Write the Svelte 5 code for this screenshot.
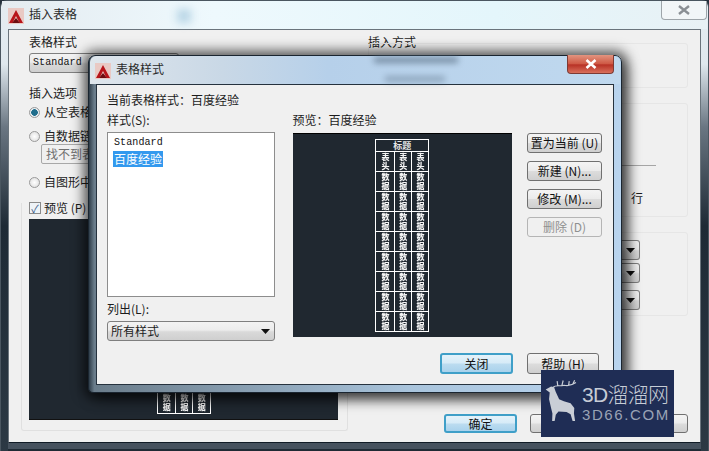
<script>
  const dataRows = Array.from({ length: 8 }, (_, i) => i);
  const cols = [0, 1, 2];
  const sideButtons = [
    { label: "置为当前 (U)" },
    { label: "新建 (N)..." },
    { label: "修改 (M)..." },
    { label: "删除 (D)", disabled: true }
  ];
</script>

{#snippet logo()}
  <svg class="acad" viewBox="0 0 16 16" width="16" height="16">
    <rect width="16" height="16" fill="#e9c9c4" />
    <path d="M1 15 L8 2 L15 15 L11.5 15 L8 8 L4.5 15Z" fill="#b8141a" />
    <path d="M4 15 L8 10 L12 15Z" fill="#6d0c10" />
  </svg>
{/snippet}

{#snippet arrow()}
  <svg class="arrow" viewBox="0 0 9 5" width="9" height="5"><path d="M0 0H9L4.5 5Z" fill="#111" /></svg>
{/snippet}

{#snippet cell(text)}
  <div class="cell"><span>{text}</span></div>
{/snippet}

<div class="screen">
  <!-- back window -->
  <div class="win">
    <div class="titlebar">
      {@render logo()}
      <span class="title">插入表格</span>
      <i class="smudge"></i>
      <div class="close-back">
        <svg viewBox="0 0 12 10" width="12" height="10"><path d="M1 1L11 9M11 1L1 9" stroke="#8a8f94" stroke-width="2.4" /></svg>
      </div>
    </div>
    <div class="body">
      <div class="left">
        <div class="txt">表格样式</div>
        <div class="select std"><span class="latin">Standard</span></div>
        <div class="txt opts">插入选项</div>
        <div class="radio-row first"><i class="radio on"></i>从空表格</div>
        <div class="radio-row"><i class="radio"></i>自数据链</div>
        <div class="input-box">找不到表</div>
        <div class="radio-row third"><i class="radio"></i>自图形中</div>
        <div class="preview-group">
          <div class="check-row"><i class="check">✓</i>预览 (P)</div>
          <div class="dark-back">
            <div class="mini">
              <div class="row">{#each cols as c (c)}{@render cell("数据")}{/each}</div>
            </div>
          </div>
        </div>
      </div>
      <div class="right">
        <div class="txt">插入方式</div>
        <div class="faint box1"></div>
        <div class="faint box2">
          <div class="rule"></div>
          <div class="hang">行</div>
        </div>
        <div class="faint box3">
          <div class="select mini-select">{@render arrow()}</div>
          <div class="select mini-select">{@render arrow()}</div>
          <div class="select mini-select">{@render arrow()}</div>
        </div>
        <div class="actions">
          <button class="btn default ok">确定</button>
          <button class="btn cancel" aria-label="取消"></button>
        </div>
      </div>
    </div>
  </div>

  <!-- front dialog -->
  <div class="dialog">
    <div class="d-title">
      {@render logo()}
      <span class="title">表格样式</span>
      <i class="ghost g1"></i>
      <i class="ghost g2"></i>
      <div class="close-red">
        <svg viewBox="0 0 12 10" width="12" height="10"><path d="M1.5 1L10.5 9M10.5 1L1.5 9" stroke="#fff" stroke-width="2.6" /></svg>
      </div>
    </div>
    <div class="d-body">
      <div class="current">当前表格样式：百度经验</div>
      <div class="d-cols">
        <div class="d-left">
          <div class="txt">样式(S):</div>
          <div class="list">
            <div class="latin item">Standard</div>
            <div class="item selected">百度经验</div>
          </div>
          <div class="txt listed">列出(L):</div>
          <div class="select all"><span>所有样式</span>{@render arrow()}</div>
        </div>
        <div class="d-mid">
          <div class="txt">预览：百度经验</div>
          <div class="dark">
            <div class="mini">
              <div class="head">标题</div>
              <div class="row">{#each cols as c (c)}{@render cell("表头")}{/each}</div>
              {#each dataRows as r (r)}
                <div class="row">{#each cols as c (c)}{@render cell("数据")}{/each}</div>
              {/each}
            </div>
          </div>
        </div>
        <div class="d-side">
          {#each sideButtons as b (b.label)}
            <button class="btn side" class:disabled={b.disabled}>{b.label}</button>
          {/each}
        </div>
      </div>
      <div class="d-actions">
        <button class="btn default">关闭</button>
        <button class="btn help">帮助 (H)</button>
      </div>
    </div>
  </div>

  <!-- site watermark -->
  <div class="mark">
    <svg class="deer" viewBox="0 0 110 130" width="37" height="44">
      <path d="M8 37 L24 28 L33 30 L38 44 L48 66 L62 72 L82 78 L93 92 L92 108 L96 134 L89 134 L82 110 L70 104 L46 102 L38 112 L34 134 L27 134 L28 108 L24 92 L18 66 L20 46Z" fill="#c9ced6" />
      <path d="M30 30 C38 22 50 28 62 24 M44 26 L42 12 M56 25 L60 10 M62 24 C72 27 86 24 98 16 M76 25 L78 12 M88 22 L94 9" stroke="#c9ced6" stroke-width="3.5" fill="none" />
    </svg>
    <div class="mark-text">
      <div class="mark-cn">3D溜溜网</div>
      <div class="mark-en">3D66.COM</div>
    </div>
  </div>
</div>

<style>
  :global(body) {
    margin: 0;
    background: #26323d;
  }

  .screen {
    position: relative;
    width: 709px;
    height: 451px;
    overflow: hidden;
    font-family: "Noto Sans CJK SC", "Liberation Sans", sans-serif;
    font-size: 12px;
    line-height: 12px;
    color: #1c1c1c;
  }

  .latin {
    font-family: "Liberation Mono", "DejaVu Sans Mono", monospace;
    font-size: 10px;
    letter-spacing: 0.1px;
    color: #111;
  }

  .txt {
    height: 12px;
    white-space: nowrap;
  }

  /* back window */
  .win {
    width: 709px;
    height: 451px;
    box-sizing: border-box;
    padding: 0 7px 8px;
    border-radius: 7px 7px 0 0;
    border: 1px solid #4a5660;
    border-bottom: 0;
    background: linear-gradient(#e6eef3 0, #dfe8ee 14%, #6a7682 28%, #1e2a35 50%, #2c3944 100%);
    display: flex;
    flex-direction: column;
  }

  .titlebar {
    height: 28px;
    margin: 0 -6px;
    padding-left: 6px;
    display: flex;
    align-items: center;
    gap: 5px;
    position: relative;
    background: linear-gradient(90deg, #e4ebf0, #eef9fd 30%, #e4f6fb 70%, #e8f1f5);
  }

  .acad {
    flex: none;
    margin-top: 1px;
  }

  .title {
    font-size: 12px;
    color: #2b2b2b;
    margin-top: -2px;
  }

  .smudge {
    position: absolute;
    left: 175px;
    top: 8px;
    width: 14px;
    height: 14px;
    background: #b9d6e6;
    filter: blur(4px);
  }

  .close-back {
    margin-left: auto;
    margin-top: -9px;
    width: 46px;
    height: 19px;
    box-sizing: border-box;
    border: 1px solid #9ea5aa;
    border-top: 0;
    border-radius: 0 0 4px 4px;
    background: #f2f6f8;
    display: flex;
    align-items: center;
    justify-content: center;
  }

  .body {
    flex: 1;
    box-sizing: border-box;
    border: 1px solid #6a747c;
    border-bottom-color: #111c26;
    background: #f0f0f0;
    padding: 6px 13px 0 20px;
    display: flex;
    gap: 30px;
    min-height: 0;
    box-shadow: 0 6px #46525e, 0 8px #1f2a34;
  }

  .left {
    width: 309px;
    display: flex;
    flex-direction: column;
  }

  .select {
    box-sizing: border-box;
    height: 20px;
    border: 1px solid #7f7f7f;
    border-radius: 3px;
    background: linear-gradient(#f3f3f3, #ececec 45%, #d9d9d9 55%, #cfcfcf);
    display: flex;
    align-items: center;
    justify-content: space-between;
    padding: 0 4px 0 3px;
  }

  .std {
    width: 150px;
    margin-top: 5px;
  }

  .opts {
    margin-top: 14px;
  }

  .radio-row {
    display: flex;
    align-items: center;
    gap: 4px;
    height: 12px;
    margin-top: 12px;
    white-space: nowrap;
  }

  .radio-row.first {
    margin-top: 7px;
  }

  .radio {
    width: 11px;
    height: 11px;
    box-sizing: border-box;
    border-radius: 50%;
    border: 1px solid #9a9a9a;
    background: radial-gradient(#fff, #d9d9d9);
  }

  .radio.on {
    background: radial-gradient(#1f6d8c 0 3px, #e8eef2 3.6px);
  }

  .input-box {
    width: 150px;
    height: 20px;
    margin: 2px 0 0 12px;
    box-sizing: border-box;
    border: 1px solid #a8a8a8;
    border-radius: 2px;
    padding: 3px 4px;
    color: #6f6f6f;
    white-space: nowrap;
  }

  .preview-group {
    margin: 15px 0 0 -8px;
    padding: 0 0 10px 8px;
    height: 228px;
    box-sizing: border-box;
    border: 1px solid #e0e0e0;
    border-top: 0;
    border-radius: 0 0 3px 3px;
    display: flex;
    flex-direction: column;
    width: 327px;
  }

  .check-row {
    display: flex;
    align-items: center;
    gap: 3px;
    height: 12px;
    white-space: nowrap;
    margin-left: -1px;
    margin-top: -1px;
  }

  .check {
    width: 12px;
    height: 12px;
    box-sizing: border-box;
    border: 1px solid #8a8a8a;
    background: #eef3f7;
    color: #3d5d8a;
    font-style: normal;
    font-size: 11px;
    line-height: 10px;
    text-align: center;
  }

  .dark-back {
    margin-top: 5px;
    margin-left: -1px;
    width: 309px;
    height: 203px;
    background: #202830;
    border-bottom: 1px solid #111;
    box-sizing: border-box;
    display: flex;
    flex-direction: column;
    align-items: center;
    justify-content: flex-end;
    padding-bottom: 5px;
  }

  .mini {
    width: 54px;
    box-sizing: border-box;
    border: 1px solid #fff;
    display: flex;
    flex-direction: column;
    color: #fff;
  }

  .head {
    height: 11px;
    font-size: 9px;
    line-height: 11px;
    font-weight: 700;
    text-align: center;
    color: #e6e6e6;
  }

  .row {
    display: grid;
    grid-template-columns: repeat(3, 1fr);
    height: 20px;
  }

  .head ~ .row {
    border-top: 1px solid #fff;
    box-sizing: border-box;
  }

  .cell {
    display: flex;
    align-items: center;
    justify-content: center;
    font-size: 8px;
    line-height: 8px;
    font-weight: 900;
    box-sizing: border-box;
    border-left: 1px solid #fff;
    color: #f4f4f4;
    overflow: hidden;
  }

  .cell span {
    writing-mode: vertical-rl;
    letter-spacing: 1px;
    filter: blur(0.3px);
  }

  .cell:first-child {
    border-left: 0;
  }

  .right {
    width: 320px;
    display: flex;
    flex-direction: column;
    align-items: stretch;
  }

  .faint {
    border: 1px solid #e6e6e6;
    border-radius: 3px;
    box-sizing: border-box;
  }

  .box1 {
    height: 45px;
    margin-top: -5px;
  }

  .box2 {
    height: 114px;
    margin-top: 15px;
    display: flex;
    flex-direction: column;
    align-items: flex-end;
  }

  .rule {
    margin-top: 61px;
    margin-right: 31px;
    width: 60px;
    border-top: 1px solid #a5a5a5;
  }

  .hang {
    margin-top: 26px;
    margin-right: 44px;
  }

  .box3 {
    height: 84px;
    margin-top: 15px;
    padding: 7px 47px 0 0;
    display: flex;
    flex-direction: column;
    align-items: flex-end;
    gap: 3px;
  }

  .mini-select {
    width: 18px;
    flex: none;
    border-left: 0;
    border-radius: 0 3px 3px 0;
    padding: 0 4px;
  }

  .mini-select:nth-child(3) {
    margin-top: 4px;
  }

  .actions {
    margin-top: auto;
    margin-bottom: 9px;
    display: flex;
    gap: 13px;
    margin-left: 76px;
  }

  .btn {
    font: inherit;
    color: #111;
    box-sizing: border-box;
    border: 1px solid #707070;
    border-radius: 3px;
    background: linear-gradient(#f4f4f4, #ebebeb 48%, #dcdcdc 52%, #cfcfcf);
    padding: 0;
    white-space: nowrap;
  }

  .btn.default {
    width: 73px;
    height: 21px;
    border: 2px solid #3f9fc8;
    background: linear-gradient(#e4f2fa, #d6ebf7 48%, #bcdcf0 52%, #a9d2ec);
  }

  .btn.ok {
    height: 19px;
  }

  .cancel {
    width: 158px;
    height: 19px;
  }

  /* front dialog */
  .dialog {
    position: absolute;
    left: 88px;
    top: 55px;
    width: 534px;
    height: 338px;
    box-sizing: border-box;
    padding: 0 7px 7px;
    border: 1px solid #1a2530;
    border-radius: 7px 7px 5px 5px;
    background: linear-gradient(90deg, #2f3d49 0, #6a7c8a 1%, #a9c4dc 60%, #b9d4ee 100%);
    box-shadow: 0 0 12px 5px rgba(0, 0, 0, 0.55), 5px 6px 14px rgba(0, 0, 0, 0.5);
    display: flex;
    flex-direction: column;
  }

  .d-title {
    height: 28px;
    margin: 0 -6px;
    padding-left: 5px;
    flex: none;
    display: flex;
    align-items: center;
    gap: 5px;
    position: relative;
    border-radius: 6px 6px 0 0;
    background: linear-gradient(90deg, #dfe6ec, #c9d8e6 25%, #b6d0ea 45%, #c0d9ef 100%);
  }

  .ghost {
    position: absolute;
    background: #5a6f84;
    height: 6px;
    filter: blur(3px);
    opacity: 0.7;
  }

  .g1 {
    left: 284px;
    top: 1px;
    width: 84px;
  }

  .g2 {
    left: 295px;
    top: 20px;
    width: 60px;
    opacity: 0.45;
  }

  .close-red {
    position: absolute;
    right: 6px;
    top: -1px;
    width: 47px;
    height: 19px;
    box-sizing: border-box;
    border: 1px solid #7d3a34;
    border-top: 0;
    border-radius: 0 0 4px 4px;
    background: linear-gradient(#e2947f, #cf5a46 48%, #b83226 55%, #d9705c);
    display: flex;
    align-items: center;
    justify-content: center;
  }

  .d-body {
    flex: 1;
    box-sizing: border-box;
    border: 1px solid #26323e;
    background: #f0f0f0;
    padding: 9px 11px 0 10px;
    display: flex;
    flex-direction: column;
    min-height: 0;
  }

  .current {
    height: 12px;
    white-space: nowrap;
  }

  .d-cols {
    display: flex;
    margin-top: 8px;
  }

  .d-left {
    width: 168px;
    display: flex;
    flex-direction: column;
  }

  .list {
    margin-top: 6px;
    height: 165px;
    box-sizing: border-box;
    border: 1px solid #8d8d8d;
    background: #fff;
    padding: 2px 5px;
    display: flex;
    flex-direction: column;
    align-items: flex-start;
  }

  .item {
    height: 16px;
    line-height: 16px;
    padding: 0 1px;
  }

  .item.selected {
    background: #3399ee;
    color: #fff;
  }

  .listed {
    margin-top: 6px;
  }

  .all {
    margin-top: 6px;
    padding-left: 3px;
  }

  .d-mid {
    margin-left: 18px;
    width: 220px;
    display: flex;
    flex-direction: column;
  }

  .dark {
    margin-top: 7px;
    height: 204px;
    box-sizing: border-box;
    padding-top: 5px;
    background: #202830;
    border-top: 1px solid #000;
    display: flex;
    flex-direction: column;
    align-items: center;
  }

  .d-side {
    margin-left: 15px;
    margin-top: 19px;
    display: flex;
    flex-direction: column;
    gap: 8px;
  }

  .side {
    width: 75px;
    height: 20px;
  }

  .side.disabled {
    background: #f0f0f0;
    border-color: #b5b5b5;
    color: #8f8f8f;
  }

  .d-actions {
    margin-top: 12px;
    display: flex;
    justify-content: flex-end;
    gap: 14px;
  }

  .help {
    width: 72px;
    height: 21px;
    margin-right: 3px;
  }

  /* watermark */
  .mark {
    position: absolute;
    left: 541px;
    top: 370px;
    width: 133px;
    height: 67px;
    box-sizing: border-box;
    padding: 7px 0 0 2px;
    background: #1f2d55;
    display: flex;
    gap: 2px;
    align-items: flex-start;
  }

  .deer {
    flex: none;
  }

  .mark-text {
    margin-top: 5px;
  }

  .mark-cn {
    font-family: "Liberation Sans", "Noto Sans CJK SC", sans-serif;
    font-size: 21px;
    line-height: 26px;
    color: #c6ccd6;
    white-space: nowrap;
    letter-spacing: -0.7px;
    font-weight: 300;
  }

  .mark-en {
    font-family: "Liberation Sans", sans-serif;
    font-size: 15px;
    line-height: 15px;
    letter-spacing: 1.6px;
    color: #9aa3b5;
    white-space: nowrap;
    margin-top: -1px;
  }

  .arrow {
    flex: none;
  }
</style>
